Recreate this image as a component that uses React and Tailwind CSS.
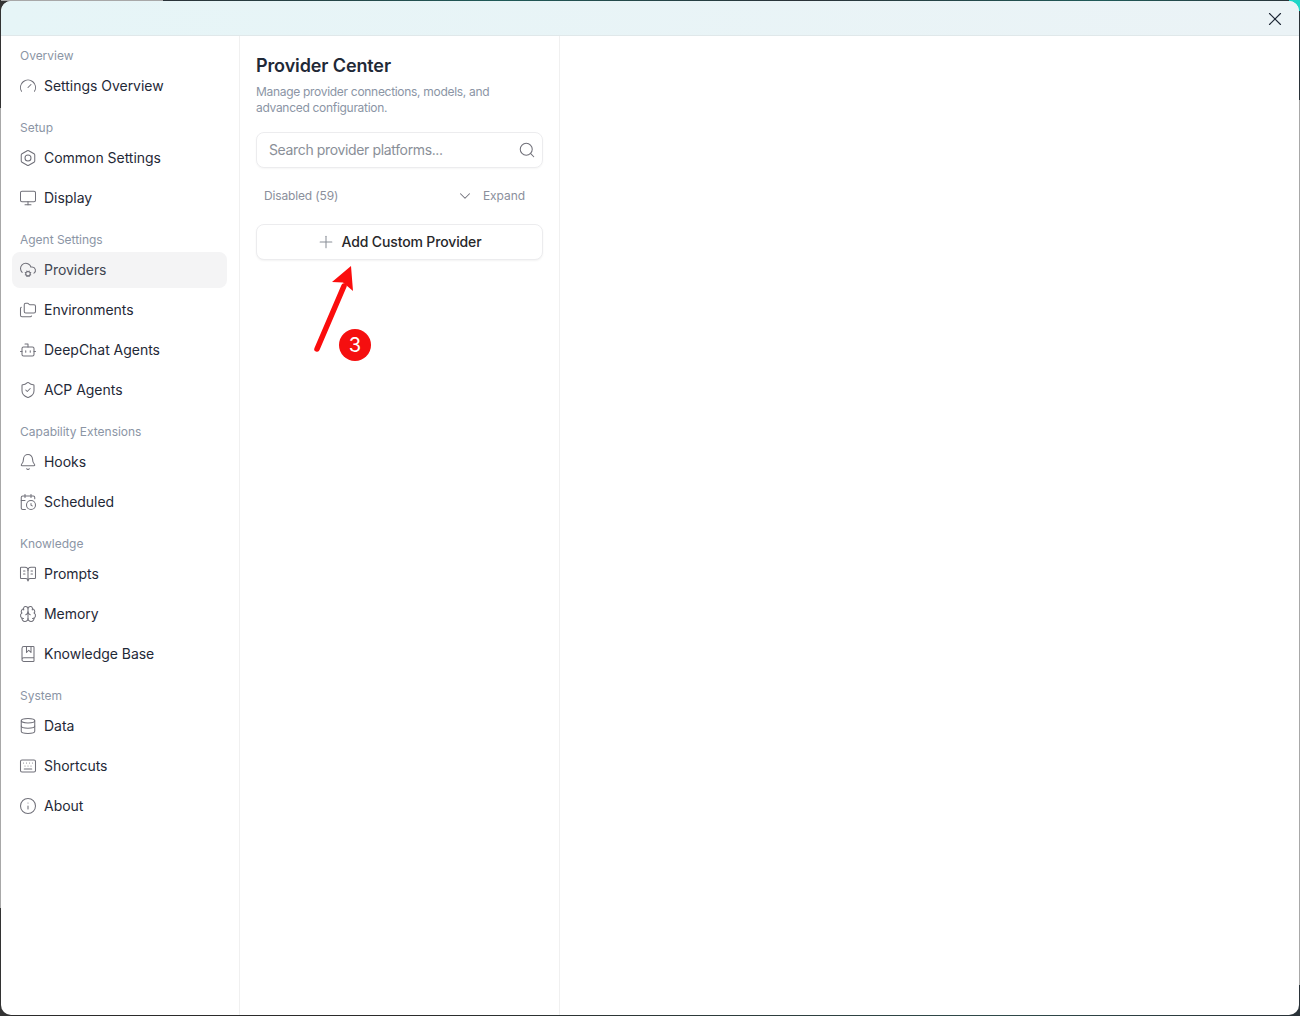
import React from "react";
import {
  Gauge, Monitor, CloudCog, Folders, Bot, ShieldCheck, Bell, CalendarClock,
  BookOpenText, Brain, BookMarked, Database, Keyboard, Info, Search, ChevronDown, Plus, X,
} from "lucide-react";

const HexGear = (props) => (
  <svg viewBox="0 0 24 24" fill="none" stroke="currentColor" strokeLinecap="round" strokeLinejoin="round" {...props}>
    <path d="M21 16V8a2 2 0 0 0-1-1.73l-7-4a2 2 0 0 0-2 0l-7 4A2 2 0 0 0 3 8v8a2 2 0 0 0 1 1.73l7 4a2 2 0 0 0 2 0l7-4A2 2 0 0 0 21 16z" />
    <circle cx="12" cy="12" r="4" />
  </svg>
);

const sections = [
  { label: "Overview", items: [{ name: "Settings Overview", icon: Gauge }] },
  { label: "Setup", items: [{ name: "Common Settings", icon: HexGear }, { name: "Display", icon: Monitor }] },
  {
    label: "Agent Settings",
    items: [
      { name: "Providers", icon: CloudCog, active: true },
      { name: "Environments", icon: Folders },
      { name: "DeepChat Agents", icon: Bot },
      { name: "ACP Agents", icon: ShieldCheck },
    ],
  },
  { label: "Capability Extensions", items: [{ name: "Hooks", icon: Bell }, { name: "Scheduled", icon: CalendarClock }] },
  {
    label: "Knowledge",
    items: [
      { name: "Prompts", icon: BookOpenText },
      { name: "Memory", icon: Brain },
      { name: "Knowledge Base", icon: BookMarked },
    ],
  },
  {
    label: "System",
    items: [
      { name: "Data", icon: Database },
      { name: "Shortcuts", icon: Keyboard },
      { name: "About", icon: Info },
    ],
  },
];

export default function App() {
  return (
    <div className="h-[1016px] w-[1300px] overflow-hidden p-px font-['Inter','Liberation_Sans',sans-serif] [background:linear-gradient(#333,#333)_left_0_top_1px/11px_11px_no-repeat,linear-gradient(#1fd6c8,#1fd6c8)_right_0_top_0/11px_11px_no-repeat,linear-gradient(#333,#333)_left_0_bottom_0/11px_11px_no-repeat,linear-gradient(#2a3238,#2a3238)_right_0_bottom_0/11px_11px_no-repeat,linear-gradient(180deg,#333_0,#333_108px,#a8a8a8_108px,#a8a8a8_908px,#333_908px)_left_top/1px_100%_no-repeat,linear-gradient(180deg,#2a3238_0,#2a3238_100px,#a8a8a8_100px,#a8a8a8_985px,#2a3238_985px)_right_top/1px_100%_no-repeat,linear-gradient(90deg,#2b2b2b_0,#2b2b2b_400px,#2f4a4a_1000px,#2a3238_1300px)_left_bottom/100%_1px_no-repeat,linear-gradient(90deg,#a8a8a8_0,#a8a8a8_163px,#2a3238_163px,#1f5a58_500px,#2a3238_800px,#1f5a58_1100px,#2a3238_1300px)]">
      <div className="relative flex h-full w-full flex-col overflow-hidden rounded-[10px] bg-white">
        <header className="flex h-[35px] shrink-0 items-center justify-end border-b border-[#e0e8ea] bg-[linear-gradient(90deg,#e6f5f7,#ebf3f6)]">
          <button className="mr-[13px] mt-[2px] text-[#1f2937]">
            <X className="h-[22px] w-[22px]" strokeWidth={1.25} />
          </button>
        </header>
        <div className="flex min-h-0 flex-1">
          <aside className="w-[239px] shrink-0 border-r border-[#f0f0f0] pl-[11px] pr-[12px] pt-[8px]">
            {sections.map((s) => (
              <div key={s.label} className="mb-[12px]">
                <div className="flex h-[24px] items-center pl-[8px] text-[12px] tracking-[-0.02px] text-[#8b95a5]">{s.label}</div>
                <div className="flex flex-col gap-[4px]">
                  {s.items.map((it) => (
                    <div
                      key={it.name}
                      className={`flex h-[36px] items-center gap-[7px] rounded-lg pl-[7px] text-[14px] tracking-[-0.03px] ${it.active ? "bg-[#f4f4f5] text-[#3f4651]" : "text-[#1f2937]"}`}
                    >
                      <it.icon className="h-[18px] w-[18px] shrink-0 text-[#71717a]" strokeWidth={1.4} />
                      <span className="pb-[2px]">{it.name}</span>
                    </div>
                  ))}
                </div>
              </div>
            ))}
          </aside>
          <section className="relative w-[320px] shrink-0 border-r border-[#f0f0f0] px-[16px] pt-[16px]">
            <h1 className="text-[18px] leading-[28px] font-semibold tracking-[-0.12px] text-[#1f2937]">Provider Center</h1>
            <p className="mt-[4px] text-[12px] leading-[16px] tracking-[-0.3px] text-[#8b95a5]">
              Manage provider connections, models, and
              <br />
              advanced configuration.
            </p>
            <div className="mt-[16px] flex h-[36px] w-[287px] items-center justify-between rounded-lg border border-[#ececee] bg-white pl-[12px] pr-[6px] shadow-[0_1px_2px_rgba(0,0,0,0.04)]">
              <span className="pb-[2px] text-[14px] tracking-[-0.36px] text-[#8a8f98]">Search provider platforms...</span>
              <Search className="h-[18px] w-[18px] text-[#71717a]" strokeWidth={1.4} />
            </div>
            <div className="mt-[8px] flex h-[40px] w-[287px] items-center pl-[8px] pr-[18px] text-[12px] tracking-[-0.15px] text-[#8b8f9c]">
              <span>Disabled (59)</span>
              <ChevronDown className="ml-auto h-[18px] w-[18px] text-[#71717a]" strokeWidth={1.4} />
              <span className="ml-[9px] tracking-[-0.05px]">Expand</span>
            </div>
            <div className="mt-[8px] flex h-[36px] w-[287px] items-center justify-center gap-[6px] rounded-lg border border-[#ececee] bg-white pr-[2px] text-[14px] font-[450] tracking-[-0.14px] text-[#27272a] shadow-[0_1px_2px_rgba(0,0,0,0.05)]">
              <Plus className="h-[20px] w-[20px] text-[#8a8f98]" strokeWidth={1.25} />
              <span className="pb-[2px]">Add Custom Provider</span>
            </div>
            <svg className="absolute left-0 top-[200px] h-[150px] w-[150px]" viewBox="0 0 150 150" fill="none">
              <path d="M77 113 L104 50" stroke="#fb0d0d" strokeWidth="5.5" strokeLinecap="round" />
              <path d="M111 30 L92 46 L103 46.5 L113 55 Z" fill="#fb0d0d" />
            </svg>
            <div className="absolute left-[99px] top-[293px] flex h-[32px] w-[32px] items-center justify-center rounded-full bg-[#f50f0f] text-[20px] text-white">
              3
            </div>
          </section>
          <main className="flex-1" />
        </div>
      </div>
    </div>
  );
}
